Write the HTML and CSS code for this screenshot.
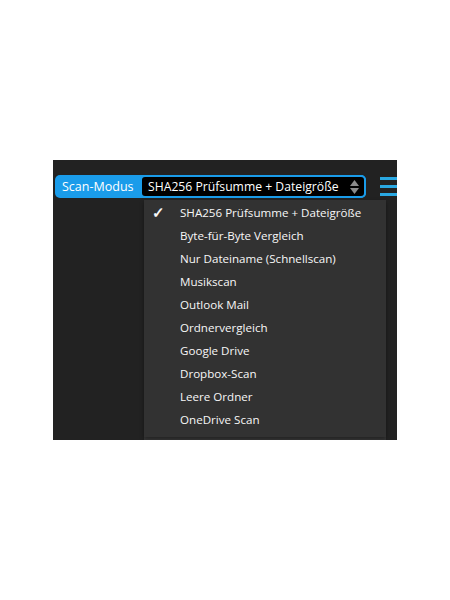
FILE: index.html
```html
<!DOCTYPE html>
<html lang="de">
<head>
    <meta charset="UTF-8">
    <meta name="viewport" content="width=device-width, initial-scale=1.0">
    <title>Scan-Modus</title>
    <link rel="stylesheet" href="styles.css">
</head>
<body>
    <div class="panel">
        <div class="toolbar">
            <div class="mode-select">
                <span class="mode-label">Scan-Modus</span>
                <div class="mode-value">
                    <span>SHA256 Prüfsumme + Dateigröße</span>
                    <svg class="arrows" width="9" height="14" viewBox="0 0 9 14">
                        <path d="M4.5 0 L9 6 L0 6 Z" fill="#8a8a8a"/>
                        <path d="M4.5 14 L9 8 L0 8 Z" fill="#8a8a8a"/>
                    </svg>
                </div>
            </div>
            <div class="burger">
                <span></span>
                <span></span>
                <span></span>
            </div>
        </div>
        <div class="under-strip"></div>

        <ul class="menu">
            <li class="checked">SHA256 Prüfsumme + Dateigröße</li>
            <li>Byte-für-Byte Vergleich</li>
            <li>Nur Dateiname (Schnellscan)</li>
            <li>Musikscan</li>
            <li>Outlook Mail</li>
            <li>Ordnervergleich</li>
            <li>Google Drive</li>
            <li>Dropbox-Scan</li>
            <li>Leere Ordner</li>
            <li>OneDrive Scan</li>
        </ul>
    </div>
</body>
</html>
```

FILE: styles.css
```css
:root {
    --panel-bg: #222222;
    --menu-bg: #323232;
    --accent: #1a9cea;
    --burger: #2aa8e2;
    --text: #f7f7f7;
    --font-family: "Open Sans", "Noto Sans", Roboto, sans-serif;
}

* {
    box-sizing: border-box;
    margin: 0;
    padding: 0;
}

body {
    background: #ffffff;
    font-family: var(--font-family);
    color: var(--text);
}

.panel {
    position: relative;
    width: 344px;
    height: 280px;
    margin: 160px 0 0 53px;
    background: var(--panel-bg);
    overflow: hidden;
}

.toolbar {
    display: flex;
    align-items: center;
    gap: 14px;
    padding: 15px 0 0 2px;
}

.mode-select {
    display: flex;
    flex: none;
    height: 23px;
    background: var(--accent);
    border-radius: 5px;
    white-space: nowrap;
}

.mode-label {
    display: flex;
    align-items: center;
    flex: none;
    width: 85px;
    padding-left: 7px;
    font-size: 12.5px;
    color: #ffffff;
}

.mode-value {
    display: flex;
    align-items: center;
    justify-content: space-between;
    flex: none;
    width: 226px;
    padding: 0 5px 0 6px;
    background: #000000;
    border: 2px solid var(--accent);
    border-radius: 5px;
    font-size: 12.2px;
    color: #ffffff;
}

.arrows {
    flex: none;
}

.burger {
    display: flex;
    flex-direction: column;
    flex: none;
    gap: 5px;
    width: 20px;
}

.burger span {
    display: block;
    height: 3px;
    background: var(--burger);
}

.under-strip {
    position: absolute;
    left: 91px;
    top: 273px;
    width: 242px;
    height: 7px;
    background: #383838;
    border-top: 1px solid #2a2a2a;
}

.menu {
    position: absolute;
    left: 91px;
    top: 40px;
    width: 242px;
    list-style: none;
    padding: 1px 0 6px;
    background: var(--menu-bg);
    box-shadow: 0 2px 4px rgba(0, 0, 0, 0.4);
}

.menu li {
    position: relative;
    height: 23px;
    line-height: 23px;
    padding-left: 36px;
    font-size: 11.6px;
    white-space: nowrap;
}

.menu li.checked::before {
    content: "\2713";
    position: absolute;
    left: 8px;
    font-size: 15px;
    font-weight: 700;
}
```
